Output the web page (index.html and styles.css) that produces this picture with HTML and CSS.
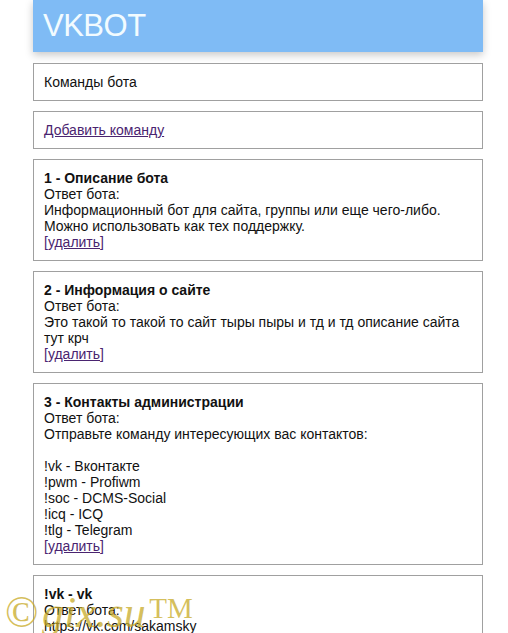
FILE: index.html
```html
<!DOCTYPE html>
<html lang="ru">
<head>
<meta charset="utf-8">
<title>VKBOT</title>
<link rel="stylesheet" href="styles.css">
</head>
<body>
<div class="wrap">
  <header class="top"><h1 class="logo">VKBOT</h1></header>
  <div class="card">Команды бота</div>
  <div class="card"><a class="link" href="#">Добавить команду</a></div>
  <div class="card">
    <b class="title">1 - Описание бота</b><br>
    Ответ бота:<br>
    Информационный бот для сайта, группы или еще чего-либо.<br>
    Можно использовать как тех поддержку.<br>
    <a class="link" href="#">[удалить]</a>
  </div>
  <div class="card">
    <b class="title">2 - Информация о сайте</b><br>
    Ответ бота:<br>
    Это такой то такой то сайт тыры пыры и тд и тд описание сайта тут крч<br>
    <a class="link" href="#">[удалить]</a>
  </div>
  <div class="card">
    <b class="title">3 - Контакты администрации</b><br>
    Ответ бота:<br>
    Отправьте команду интересующих вас контактов:<br>
    <br>
    !vk - Вконтакте<br>
    !pwm - Profiwm<br>
    !soc - DCMS-Social<br>
    !icq - ICQ<br>
    !tlg - Telegram<br>
    <a class="link" href="#">[удалить]</a>
  </div>
  <div class="card">
    <b class="title">!vk - vk</b><br>
    Ответ бота:<br>
    https://vk.com/sakamsky<br>
    <a class="link" href="#">[удалить]</a>
  </div>
</div>
<div class="mark"><span class="copy">©</span> <span class="site">gix.su</span> <span class="tm">TM</span></div>
</body>
</html>
```
FILE: styles.css
```css
html, body {
  margin: 0;
  padding: 0;
  background: #fff;
}
body {
  font-family: "Liberation Sans", Arial, sans-serif;
  font-size: 14px;
  color: #111;
  overflow: hidden;
  height: 633px;
}
.wrap {
  width: 450px;
  margin-left: 33px;
  display: flex;
  flex-direction: column;
  gap: 10px;
}
.top {
  height: 52px;
  background: #7fbbf5;
  box-shadow: 0 3px 8px rgba(0,0,0,0.22);
  display: flex;
  align-items: center;
  padding-left: 10px;
  margin-bottom: 1px;
}
.logo {
  margin: 0;
  font-weight: normal;
  font-size: 31px;
  color: #f2fbff;
  letter-spacing: -0.5px;
  line-height: 1;
  position: relative;
  top: -1px;
}
.card {
  border: 1px solid #a0a0a0;
  padding: 10px 10px;
  line-height: 16px;
}
.title { font-weight: bold; }
.link { color: #4a2470; }
.mark {
  position: absolute;
  left: 5px;
  top: 592px;
  color: rgba(200, 170, 40, 0.75);
  font-family: "Liberation Serif", "Times New Roman", serif;
  white-space: nowrap;
  pointer-events: none;
  line-height: 42px;
}
.copy { font-size: 44px; }
.site { font-size: 44px; font-style: italic; }
.tm { font-size: 29px; position: relative; top: -9px; }
```
